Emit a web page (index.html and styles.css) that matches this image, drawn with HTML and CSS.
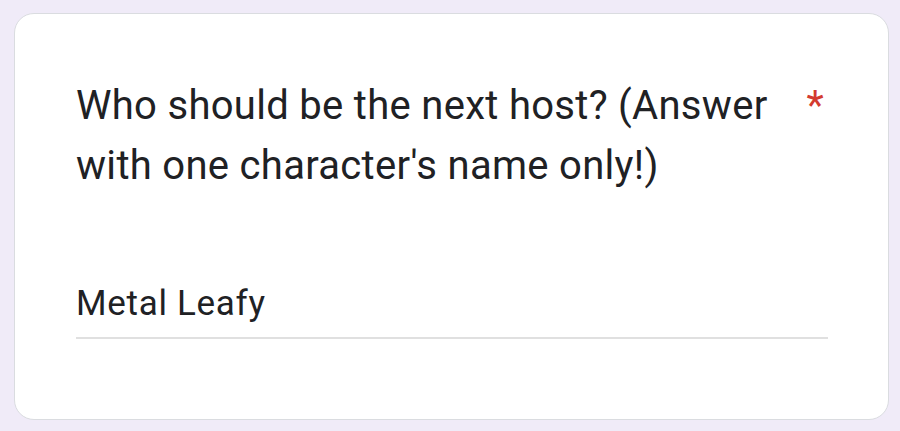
FILE: index.html
```html
<!DOCTYPE html>
<html lang="en">
<head>
    <meta charset="UTF-8">
    <meta name="viewport" content="width=device-width, initial-scale=1.0">
    <title>Question</title>
    <link rel="stylesheet" href="styles.css">
</head>
<body>
    <div class="card">
        <div class="question">
            <span class="question-title">Who should be the next host? (Answer with one character's name only!)</span>
            <span class="required">*</span>
        </div>

        <div class="answer">Metal Leafy</div>
    </div>
</body>
</html>
```

FILE: styles.css
```css
body {
    font-family: Roboto, "Liberation Sans", Arial, sans-serif;
    background-color: #f0ebf8;
    color: #202124;
    margin: 0;
    padding: 13px 11px 11px 14px;
}

.card {
    background-color: #ffffff;
    border: 1px solid #dadce0;
    border-radius: 20px;
    height: 407px;
    padding: 62px 60px 0 61px;
    box-sizing: border-box;
}

.question {
    display: flex;
    align-items: flex-start;
    font-size: 40px;
    line-height: 60px;
    letter-spacing: 0.3px;
}

.question-title {
    flex: 1;
}

.required {
    color: #d33b2f;
    padding-left: 16px;
    padding-right: 4px;
}

.answer {
    margin-top: 87px;
    font-size: 35px;
    line-height: 42px;
    letter-spacing: 0.7px;
    padding-bottom: 12px;
    border-bottom: 2px solid #e0e0e0;
}
```
